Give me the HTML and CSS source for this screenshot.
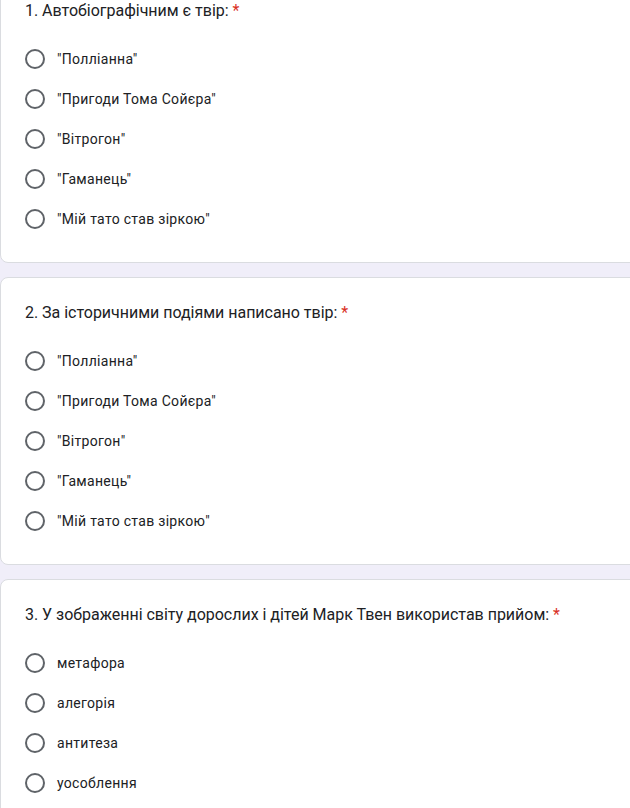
FILE: index.html
```html
<!DOCTYPE html>
<html lang="uk">
<head>
<meta charset="utf-8">
<title>Форма</title>
<link rel="stylesheet" href="styles.css">
</head>
<body>
<div class="page">
  <div class="card">
    <div class="title">1. Автобіографічним є твір: <span class="req">*</span></div>
    <div class="options">
      <div class="opt"><span class="radio"></span><span class="label">"Поллі­анна"</span></div>
      <div class="opt"><span class="radio"></span><span class="label">"Пригоди Тома Сойєра"</span></div>
      <div class="opt"><span class="radio"></span><span class="label">"Вітрогон"</span></div>
      <div class="opt"><span class="radio"></span><span class="label">"Гаманець"</span></div>
      <div class="opt"><span class="radio"></span><span class="label">"Мій тато став зіркою"</span></div>
    </div>
  </div>
  <div class="card">
    <div class="title">2. За історичними подіями написано твір: <span class="req">*</span></div>
    <div class="options">
      <div class="opt"><span class="radio"></span><span class="label">"Поллі­анна"</span></div>
      <div class="opt"><span class="radio"></span><span class="label">"Пригоди Тома Сойєра"</span></div>
      <div class="opt"><span class="radio"></span><span class="label">"Вітрогон"</span></div>
      <div class="opt"><span class="radio"></span><span class="label">"Гаманець"</span></div>
      <div class="opt"><span class="radio"></span><span class="label">"Мій тато став зіркою"</span></div>
    </div>
  </div>
  <div class="card">
    <div class="title">3. У зображенні світу дорослих і дітей Марк Твен використав прийом: <span class="req">*</span></div>
    <div class="options">
      <div class="opt"><span class="radio"></span><span class="label">метафора</span></div>
      <div class="opt"><span class="radio"></span><span class="label">алегорія</span></div>
      <div class="opt"><span class="radio"></span><span class="label">антитеза</span></div>
      <div class="opt"><span class="radio"></span><span class="label">уособлення</span></div>
    </div>
  </div>
</div>
</body>
</html>
```
FILE: styles.css
```css
html,body{margin:0;padding:0}
body{
  background:#f0eef9;
  overflow:hidden;
  font-family:Roboto,"Liberation Sans",Arial,sans-serif;
  color:#202124;
}
.page{
  margin-top:-25px;
  width:720px;
  display:flex;
  flex-direction:column;
  gap:14px;
}
.card{
  background:#fff;
  border:1px solid #dadce0;
  border-radius:8px;
  padding:23px 24px 24px 24px;
  box-sizing:border-box;
  height:288px;
}
.title{
  font-size:16px;
  line-height:24px;
  letter-spacing:-0.02px;
  color:#202124;
}
.req{color:#d93025}
.options{
  margin-top:16px;
  display:flex;
  flex-direction:column;
}
.opt{
  height:40px;
  display:flex;
  align-items:center;
}
.radio{
  width:20px;
  height:20px;
  box-sizing:border-box;
  border:2px solid #5f6368;
  border-radius:50%;
  flex:none;
}
.label{
  margin-left:12px;
  font-size:14px;
  letter-spacing:0.3px;
  line-height:20px;
  color:#202124;
}
```
